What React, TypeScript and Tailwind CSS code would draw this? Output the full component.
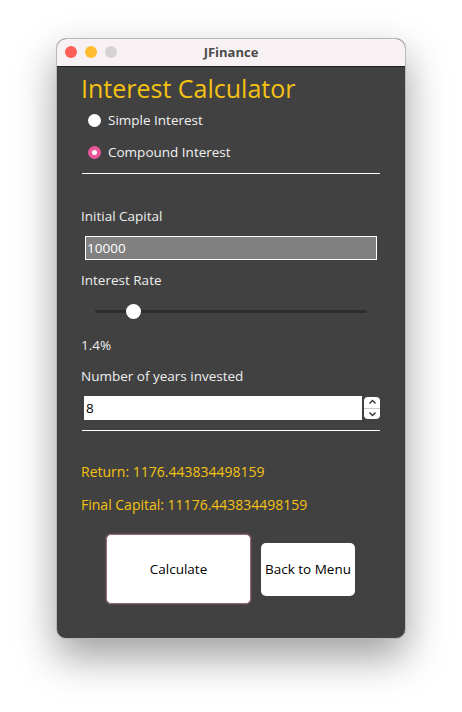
import React from "react";

const F = { fontFamily: '"Open Sans", "DejaVu Sans", sans-serif' };

function Radio({ checked, label }: { checked: boolean; label: string }) {
  return (
    <div className="flex h-[20px] items-center">
      <div className="ml-[7px] flex h-[13px] w-[13px] items-center justify-center">
        {checked ? (
          <div className="flex h-[13px] w-[13px] items-center justify-center rounded-full bg-[#e8579a]">
            <div className="h-[5px] w-[5px] rounded-full bg-white" />
          </div>
        ) : (
          <div className="h-[13px] w-[13px] rounded-full bg-white" />
        )}
      </div>
      <span className="ml-[7px] text-[13.5px] text-[#f2f2f2]">{label}</span>
    </div>
  );
}

export default function App() {
  return (
    <div className="h-[712px] w-[462px] bg-white pl-[56px] pt-[38px]" style={F}>
      <div className="flex w-[350px] flex-col overflow-hidden rounded-[10px] border border-[#b8b8b8] bg-[#414141] shadow-[0_18px_40px_rgba(0,0,0,0.38)]">
        {/* title bar */}
        <div className="relative flex h-[28px] items-center justify-center border-b border-[#1e1e1e] bg-[#f8f1f4]">
          <div className="absolute left-[8px] top-[7px] flex gap-[8px]">
            <div className="h-[12px] w-[12px] rounded-full bg-[#fe5f57]" />
            <div className="h-[12px] w-[12px] rounded-full bg-[#febc2e]" />
            <div className="h-[12px] w-[12px] rounded-full bg-[#d5d1d5]" />
          </div>
          <span className="text-[13px] font-bold text-[#4b4b4b]">JFinance</span>
        </div>

        <div className="flex flex-col pl-[24px] pr-[25px]">
          <div className="mt-[9px] flex h-[26px] items-center text-[25px] text-[#f5c211]">
            Interest Calculator
          </div>
          <div className="mt-[8px]">
            <Radio checked={false} label="Simple Interest" />
          </div>
          <div className="mt-[12px]">
            <Radio checked={true} label="Compound Interest" />
          </div>
          <div className="ml-px mt-[11px] h-px w-[298px] bg-white" />

          <div className="mt-[32px] flex h-[20px] items-center text-[13.5px] text-[#eeeeee]">Initial Capital</div>
          <div className="ml-[4px] mt-[10px] flex h-[24px] w-[292px] items-center border border-white bg-[#808080] pl-[1px] text-[13.5px] text-white">
            10000
          </div>

          <div className="mt-[10px] flex h-[20px] items-center text-[13.5px] text-[#eeeeee]">Interest Rate</div>
          <div className="relative ml-[14px] mt-[11px] flex h-[20px] w-[272px] items-center">
            <div className="h-[3px] w-full rounded-full bg-[#2d2d2d]" />
            <div className="absolute left-[31px] top-[3px] h-[15px] w-[15px] rounded-full bg-white" />
          </div>
          <div className="mt-[14px] flex h-[20px] items-center text-[13.5px] text-[#eeeeee]">1.4%</div>

          <div className="mt-[11px] flex h-[20px] items-center text-[13.5px] text-[#eeeeee]">Number of years invested</div>
          <div className="ml-[3px] mt-[10px] flex h-[24px] items-center">
            <div className="flex h-[24px] w-[279px] items-center bg-white pl-[2px] text-[13.5px] text-black">8</div>
            <div className="ml-[2px] flex h-[22px] w-[16px] flex-col items-center justify-between rounded-[4px] bg-white py-[2px]">
              <svg width="9" height="6" viewBox="0 0 9 6">
                <path d="M1.5 4.5 L4.5 1.5 L7.5 4.5" fill="none" stroke="#333" strokeWidth="1.4" />
              </svg>
              <div className="h-px w-full bg-[#c8c8c8]" />
              <svg width="9" height="6" viewBox="0 0 9 6">
                <path d="M1.5 1.5 L4.5 4.5 L7.5 1.5" fill="none" stroke="#333" strokeWidth="1.4" />
              </svg>
            </div>
          </div>
          <div className="ml-px mt-[10px] h-px w-[298px] bg-white" />

          <div className="mt-[30px] flex h-[20px] items-center text-[14px] text-[#f5c211]">Return: 1176.443834498159</div>
          <div className="mt-[13px] flex h-[20px] items-center text-[14px] text-[#f5c211]">Final Capital: 11176.443834498159</div>

          <div className="ml-[25px] mt-[20px] flex items-center">
            <div className="flex h-[70px] w-[145px] items-center justify-center rounded-[5px] border border-[#8c6a7c] bg-white text-[13.5px] text-black shadow-[0_0_2px_rgba(200,120,160,0.6)]">
              Calculate
            </div>
            <div className="ml-[10px] flex h-[53px] w-[94px] items-center justify-center whitespace-nowrap rounded-[5px] bg-white text-[13.5px] text-black">
              Back to Menu
            </div>
          </div>
          <div className="h-[34px]" />
        </div>
      </div>
    </div>
  );
}
